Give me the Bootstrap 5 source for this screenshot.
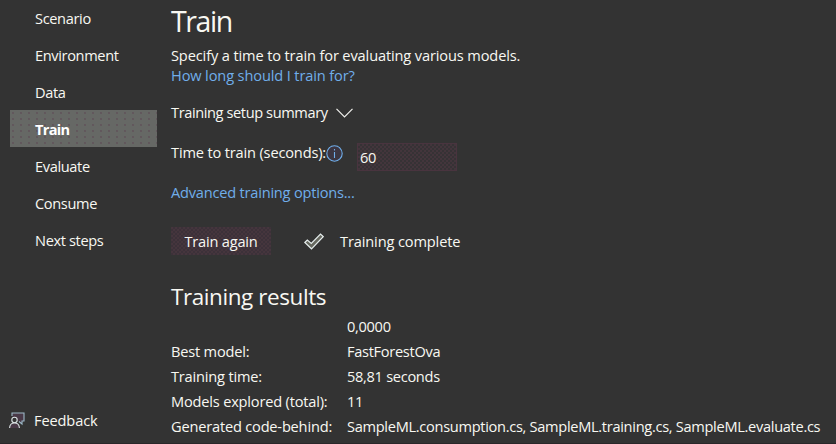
<!DOCTYPE html>
<html lang="en">
<head>
<meta charset="utf-8">
<meta name="viewport" content="width=device-width, initial-scale=1">
<title>Model Builder - Train</title>
<link rel="stylesheet" href="https://cdn.jsdelivr.net/npm/bootstrap@5.3.0/dist/css/bootstrap.min.css">
<style>
  body { background: #333; color: #f8f8f2; font: 14.6px/20px "Open Sans", "Noto Sans", sans-serif; letter-spacing: -.36px; white-space: nowrap; }
  .app { height: 444px; border-bottom: 1px solid #2a2729; }
  .side { width: 157px; padding-left: 10px; margin-top: -1px; }
  .side .nav-link { height: 37px; padding: 0 0 0 25px; line-height: 38px; color: inherit; }
  .side .nav-link.active { color: #fff; font-weight: 700; letter-spacing: -.7px; background: radial-gradient(circle at 3px 3px, #604f58 .6px, transparent .9px) 0 0/8px 6px #666865; }
  .feedback { height: 20px; margin: 0 0 13px -1px; gap: 9px; letter-spacing: -.12px; }
  .content { padding-left: 14px; }
  h1 { font-size: 28.5px; line-height: 40px; font-weight: 400; letter-spacing: -1.4px; margin: 1px 0 4px; }
  h2 { font-size: 22.5px; line-height: 30px; font-weight: 400; letter-spacing: -.42px; margin: 27px 0 2px; }
  .lk { color: #70aeea; text-decoration: none; }
  .intro { letter-spacing: -.13px; }
  .summary { margin-top: 17px; gap: 8px; letter-spacing: -.4px; }
  .summary svg { margin-top: 2px; }
  .time { height: 28px; margin-top: 21px; }
  .time label { height: 20px; margin-top: -1px; letter-spacing: -.16px; }
  .time .info { margin-top: 2px; }
  .dots { background-image: radial-gradient(circle at 1px 1px, #49373f .6px, transparent 1px), radial-gradient(circle at 3px 3px, #49373f .6px, transparent 1px); background-size: 4px 4px; }
  .time .form-control { width: 100px; height: 28px; margin-left: 14px; padding: 0 2px 1px; border: 1px solid #49343f; border-radius: 0; color: inherit; font: inherit; letter-spacing: inherit; background-color: #363235; }
  .adv { margin-top: 11px; letter-spacing: -.21px; }
  .run { margin-top: 25px; height: 28px; letter-spacing: -.13px; }
  .run .btn { width: 100px; height: 28px; padding: 0 0 1px; border: 0; border-radius: 0; color: inherit; font: inherit; letter-spacing: -.2px; background-color: #3c3139; }
  .run .tick { margin-left: 33px; margin-right: 16px; }
  .results { display: grid; grid-template-columns: 176px 1fr; line-height: 25px; letter-spacing: -.3px; }
  .results .key { letter-spacing: -.19px; }
</style>
</head>
<body>
<div class="app d-flex overflow-hidden">
  <aside class="side d-flex flex-column flex-shrink-0">
    <nav class="nav flex-column flex-nowrap">
      <a class="nav-link" href="#">Scenario</a>
      <a class="nav-link" href="#">Environment</a>
      <a class="nav-link" href="#">Data</a>
      <a class="nav-link active" href="#">Train</a>
      <a class="nav-link" href="#">Evaluate</a>
      <a class="nav-link" href="#">Consume</a>
      <a class="nav-link" href="#">Next steps</a>
    </nav>
    <div class="feedback d-flex align-items-center mt-auto">
      <svg width="16" height="17" viewBox="0 0 16 17" fill="none" stroke="#dce3e5" stroke-width="1.1"><path d="M3 4V1H15V9H13V12L10 9.500" fill="#493947" stroke="#9db9c8"/><circle cx="5.500" cy="8" r="2.700" fill="#333"/><path d="M.6 16C.8 9.300 10.200 9.300 10.400 16" fill="#493947"/></svg>
      <span>Feedback</span>
    </div>
  </aside>
  <main class="content flex-grow-1">
    <h1>Train</h1>
    <div class="intro">Specify a time to train for evaluating various models.</div>
    <div class="intro"><a class="lk" href="#">How long should I train for?</a></div>
    <div class="summary d-flex align-items-center"><span>Training setup summary</span>
      <svg width="17" height="10" viewBox="0 0 17 10" fill="none" stroke="#f0f0ec" stroke-width="1.2"><path d="M.5 .8L8.500 8.800L16.500 .8"/></svg>
    </div>
    <div class="time d-flex">
      <label for="secs">Time to train (seconds):</label>
      <svg class="info" width="17" height="17" viewBox="0 0 17 17" fill="none" stroke="#70aeea" stroke-width="1.1"><circle cx="8.500" cy="8.500" r="7.700" fill="#3c3642"/><path d="M8.500 7V13M8.500 4V5.500"/></svg>
      <input id="secs" class="form-control dots" value="60">
    </div>
    <div class="adv"><a class="lk" href="#">Advanced training options...</a></div>
    <div class="run d-flex align-items-center">
      <button class="btn dots">Train again</button>
      <svg class="tick" width="20" height="17" viewBox="0 0 20 17" fill="#66685f" stroke="#e6eeee" stroke-width="1.2"><path d="M.8 9.500L3.300 7L7.300 10.500L16.500 1L19.200 3.600L7.500 15.800Z"/></svg>
      <span>Training complete</span>
    </div>
    <h2>Training results</h2>
    <div class="results">
      <span></span><span>0,0000</span>
      <span class="key">Best model:</span><span>FastForestOva</span>
      <span class="key">Training time:</span><span>58,81 seconds</span>
      <span class="key">Models explored (total):</span><span>11</span>
      <span class="key">Generated code-behind:</span><span>SampleML.consumption.cs, SampleML.training.cs, SampleML.evaluate.cs</span>
    </div>
  </main>
</div>
<script src="https://cdn.jsdelivr.net/npm/bootstrap@5.3.0/dist/js/bootstrap.bundle.min.js"></script>
</body>
</html>
